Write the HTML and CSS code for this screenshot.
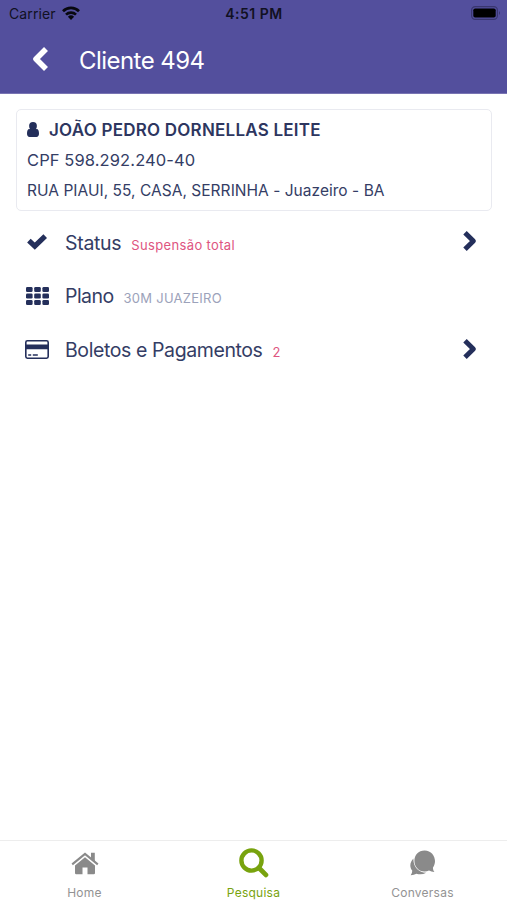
FILE: index.html
```html
<!DOCTYPE html>
<html lang="pt-BR">
<head>
<meta charset="utf-8">
<title>Cliente 494</title>
<link rel="stylesheet" href="styles.css">
</head>
<body>
<div class="app">
  <header class="header">
    <div class="statusbar">
      <div class="carrier"><span>Carrier</span>
        <svg class="wifi" width="18" height="14" viewBox="0 0 18 14" fill="none" stroke="#08080f" stroke-width="2.7"><path d="M1 5.2a11.4 11.4 0 0 1 16 0M4 8.6a7.2 7.2 0 0 1 10 0"/><path d="M5.9 10.8a4.5 4.5 0 0 1 6.2 0L9 14z" fill="#08080f" stroke="none"/></svg>
      </div>
      <span class="clock">4:51 PM</span>
      <div class="power"><svg width="31" height="14" viewBox="0 0 31 14"><rect x=".6" y=".6" width="25.8" height="12.8" rx="3.6" fill="none" stroke="#39366f" stroke-width="1.2"/><rect x="2.3" y="2.5" width="22.4" height="9" rx="1.8" fill="#000"/><path d="M28 5q2 2 0 4z" fill="#39366f"/></svg></div>
    </div>
    <div class="titlebar">
      <svg class="back" width="16" height="24" viewBox="0 0 16 24" fill="none" stroke="#fff" stroke-width="5.6" stroke-linejoin="round"><path d="M14 2 4 12l10 10"/></svg>
      <h1><span class="title">Cliente 494</span></h1>
    </div>
  </header>
  <main class="main">
    <section class="card">
      <div class="line name"><svg width="12" height="15" viewBox="0 0 12 15" fill="#242f5b"><circle cx="6" cy="3.9" r="3.9"/><path d="M2.2 6.8C.5 7.5 0 9.4 0 11.8 0 13.8 1 15 2.6 15h6.8c1.6 0 2.6-1.2 2.6-3.2 0-2.4-.5-4.3-2.2-5a4.9 4.9 0 0 1-7.6 0z"/><path d="M3 7h6v3H3z"/></svg><strong>JOÃO PEDRO DORNELLAS LEITE</strong></div>
      <div class="line"><span class="cpf">CPF 598.292.240-40</span></div>
      <div class="line"><span class="address">RUA PIAUI, 55, CASA, SERRINHA - Juazeiro - BA</span></div>
    </section>
    <nav class="menu">
      <a class="row">
        <span class="icon"><svg width="20" height="16" viewBox="0 0 20 16" fill="none" stroke="#242f5b" stroke-width="5.2"><path d="M1.9 6.7 7.8 12.2 18.2 2.2"/></svg></span>
        <span class="label status">Status</span><span class="note total">Suspensão total</span>
        <svg class="chevron" width="14" height="20" viewBox="0 0 14 20" fill="none" stroke="#242f5b" stroke-width="4.9" stroke-linejoin="round"><path d="M2 1.8 10.4 10 2 18.2"/></svg>
      </a>
      <a class="row">
        <span class="icon"><svg class="grid" width="23" height="18" viewBox="0 0 23 18" fill="#242f5b"><rect width="6.6" height="5" rx="1.3"/><rect x="8.2" width="6.6" height="5" rx="1.3"/><rect x="16.4" width="6.6" height="5" rx="1.3"/><rect y="6.5" width="6.6" height="5" rx="1.3"/><rect x="8.2" y="6.5" width="6.6" height="5" rx="1.3"/><rect x="16.4" y="6.5" width="6.6" height="5" rx="1.3"/><rect y="13" width="6.6" height="5" rx="1.3"/><rect x="8.2" y="13" width="6.6" height="5" rx="1.3"/><rect x="16.4" y="13" width="6.6" height="5" rx="1.3"/></svg></span>
        <span class="label plan">Plano</span><span class="note muted">30M JUAZEIRO</span>
      </a>
      <a class="row">
        <span class="icon"><svg class="bankcard" width="24" height="19" viewBox="0 0 24 19"><rect x=".8" y=".8" width="22.4" height="17.4" rx="1.6" fill="none" stroke="#242f5b" stroke-width="1.6"/><path d="M1 4.5h22v4.7H1zM3.2 14.2h3v1.6h-3zM7.8 14.2h5v1.6h-5z" fill="#242f5b"/></svg></span>
        <span class="label bills">Boletos e Pagamentos</span><span class="note">2</span>
        <svg class="chevron" width="14" height="20" viewBox="0 0 14 20" fill="none" stroke="#242f5b" stroke-width="4.9" stroke-linejoin="round"><path d="M2 1.8 10.4 10 2 18.2"/></svg>
      </a>
    </nav>
  </main>
  <footer class="tabs">
    <a class="tab"><span class="tabicon"><svg width="28" height="23" viewBox="0 0 28 23" fill="#8a8a8a"><path d="M14 5.2 4 13.4V21q0 1.3 1.3 1.3h6.2v-6.8h5v6.8h6.2q1.3 0 1.3-1.3v-7.6z"/><path d="M1.2 12.4 14 1.9l12.8 10.5" fill="none" stroke="#8a8a8a" stroke-width="2.1"/><path d="M20 .8h3.8v9L20 6.5z"/></svg></span><span class="home">Home</span></a>
    <a class="tab active"><span class="tabicon"><svg width="30" height="30" viewBox="0 0 30 30" fill="none" stroke="#78a30e"><circle cx="12.5" cy="12.5" r="10.1" stroke-width="4.4"/><path d="m20.3 20.3 6.6 6.6" stroke-width="4.8" stroke-linecap="round"/></svg></span><span class="search">Pesquisa</span></a>
    <a class="tab"><span class="tabicon"><svg width="26" height="26" viewBox="0 0 26 26" fill="#8a8a8a"><path d="M3.4 8.5C-.7 13.2-.3 17.4 2.2 20.5q.2 2.5-1.5 4.7 3.3-.1 5.7-1.5 5 1.7 9.8-.9C8.7 22.4 3.1 16.8 3.4 8.5z"/><path d="M14.6.4C8.4.4 4.4 4.9 4.4 10.7s4.2 10.8 10.2 10.8q2.4 0 4.4-1 2.3 1.4 5.4 1.4-1.7-2-1.4-4.4C27.7 10.8 23.8.4 14.6.4z"/></svg></span><span class="chat">Conversas</span></a>
  </footer>
</div>
</body>
</html>
```
FILE: styles.css
```css
* { box-sizing: border-box; }
body { margin: 0; background: #fff; font-family: Inter, "Liberation Sans", sans-serif; color: #343d65; }
.app { height: 900px; display: flex; flex-direction: column; }
svg { display: block; flex: none; }
.header { height: 94px; background: #534f9d; border-bottom: 1px solid #7974b3; }
.statusbar { height: 27px; display: grid; grid-template-columns: 1fr auto 1fr; align-items: center; padding: 0 5px 0 9px; color: #111122; font-size: 14px; }
.carrier { display: flex; align-items: center; gap: 6px; letter-spacing: .1px; }
.wifi { margin-top: -2px; }
.clock { font-weight: 600; letter-spacing: .5px; margin-right: 3px; }
.power { display: flex; justify-content: flex-end; margin-top: -1px; }
.titlebar { height: 66px; display: flex; align-items: center; padding-left: 32px; color: #fff; }
.back { margin-top: -2px; }
h1 { margin: 2px 0 0 31px; font-size: 24px; line-height: 30px; font-weight: 400; letter-spacing: -.55px; }
.main { flex: 1; padding: 15px 15px 0 16px; }
.card { height: 102px; border: 1px solid #e9eaf0; border-radius: 5px; padding: 5px 10px; }
.line { height: 30px; display: flex; align-items: center; font-size: 16px; white-space: nowrap; }
.name { gap: 10px; color: #2d365f; }
.name svg { margin-top: -2px; }
.name strong { font-size: 17px; font-weight: 600; letter-spacing: .23px; margin-top: -1px; }
.cpf { font-size: 16.5px; letter-spacing: .1px; }
.address { font-size: 15.5px; letter-spacing: .03px; }
.menu { padding-top: 4px; }
.row { height: 54px; display: flex; align-items: center; padding: 0 15px 0 9px; }
.icon { width: 40px; display: flex; }
.row:first-child .icon svg { margin-left: 2px; }
.row .grid { margin: -1px 0 0 1px; }
.row .bankcard { margin-top: -2px; }
.label { font-size: 19.5px; line-height: 24px; letter-spacing: -.4px; }
.status { letter-spacing: -.3px; margin-top: 2px; }
.plan { letter-spacing: -.55px; }
.note { margin: 4px 0 0 10px; font-size: 13px; line-height: 18px; color: #de557f; }
.total { letter-spacing: .35px; margin-top: 5px; }
.muted { color: #9ca2ba; letter-spacing: .25px; }
.chevron { margin: -2px 0 0 auto; }
.tabs { height: 60px; border-top: 1px solid #ededed; display: flex; }
.tab { flex: 1; display: flex; flex-direction: column; align-items: center; font-size: 12px; line-height: 15px; color: #939393; letter-spacing: .25px; }
.tabicon { height: 44px; display: flex; align-items: center; }
.active { color: #78a30e; }
```
